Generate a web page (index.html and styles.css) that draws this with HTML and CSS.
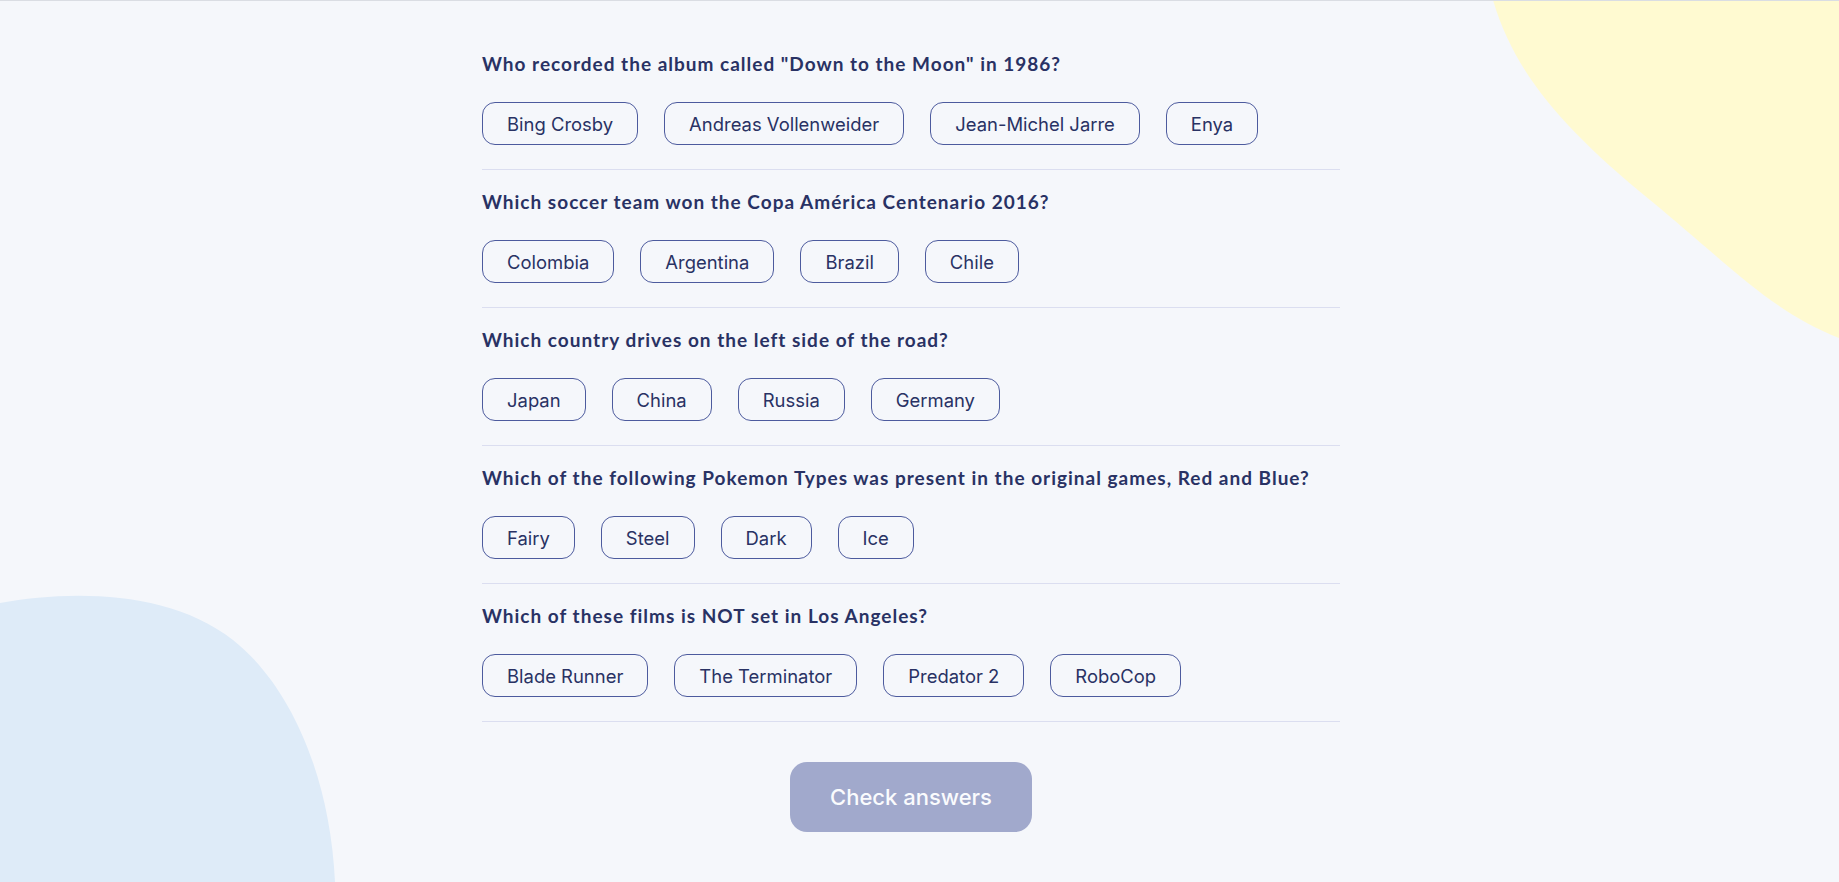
FILE: index.html
```html
<!DOCTYPE html>
<html lang="en">
<head>
<meta charset="utf-8">
<title>Quizzical</title>
<link rel="stylesheet" href="styles.css">
</head>
<body>
<svg class="blob blob-yellow" width="359" height="345" viewBox="0 0 359 345" aria-hidden="true">
  <path d="M13 0 C 35 75, 85 130, 170 200 S 290 310, 359 338 L 359 0 Z" fill="#FFFAD1"/>
</svg>
<svg class="blob blob-blue" width="340" height="292" viewBox="0 0 340 292" aria-hidden="true">
  <path d="M0 13 C 70 0, 170 0, 233 50 C 290 95, 330 185, 335 292 L 0 292 Z" fill="#DEEBF8"/>
</svg>
<main class="quiz">
  <section class="question">
    <h2 class="question-title">Who recorded the album called "Down to the Moon" in 1986?</h2>
    <div class="answers">
      <button class="answer">Bing Crosby</button>
      <button class="answer">Andreas Vollenweider</button>
      <button class="answer">Jean-Michel Jarre</button>
      <button class="answer">Enya</button>
    </div>
  </section>
  <section class="question">
    <h2 class="question-title">Which soccer team won the Copa América Centenario 2016?</h2>
    <div class="answers">
      <button class="answer">Colombia</button>
      <button class="answer">Argentina</button>
      <button class="answer">Brazil</button>
      <button class="answer">Chile</button>
    </div>
  </section>
  <section class="question">
    <h2 class="question-title">Which country drives on the left side of the road?</h2>
    <div class="answers">
      <button class="answer">Japan</button>
      <button class="answer">China</button>
      <button class="answer">Russia</button>
      <button class="answer">Germany</button>
    </div>
  </section>
  <section class="question">
    <h2 class="question-title">Which of the following Pokemon Types was present in the original games, Red and Blue?</h2>
    <div class="answers">
      <button class="answer">Fairy</button>
      <button class="answer">Steel</button>
      <button class="answer">Dark</button>
      <button class="answer">Ice</button>
    </div>
  </section>
  <section class="question">
    <h2 class="question-title">Which of these films is NOT set in Los Angeles?</h2>
    <div class="answers">
      <button class="answer">Blade Runner</button>
      <button class="answer">The Terminator</button>
      <button class="answer">Predator 2</button>
      <button class="answer">RoboCop</button>
    </div>
  </section>
  <div class="actions">
    <button class="check" disabled>Check answers</button>
  </div>
</main>
</body>
</html>
```
FILE: styles.css
```css
html, body {
  height: 100%;
}
body {
  margin: 0;
  padding: 0 17px 0 0;
  box-sizing: border-box;
  background: #F5F7FB;
  border-top: 1px solid #dadde3;
  overflow: hidden;
  position: relative;
  font-family: Inter, "Liberation Sans", sans-serif;
  color: #293264;
}
.blob {
  position: absolute;
  display: block;
  z-index: 0;
}
.blob-yellow {
  top: -1px;
  right: 0;
}
.blob-blue {
  left: 0;
  bottom: 0;
}
.quiz {
  position: relative;
  z-index: 1;
  width: 858px;
  margin: 0 auto;
  padding-top: 31px;
}
.question {
  padding: 20px 0 24px;
  border-bottom: 1px solid #DBDEF0;
}
.question-title {
  margin: 0 0 26px;
  font-family: Lato, "Open Sans", sans-serif;
  font-weight: 700;
  font-size: 19px;
  line-height: 24px;
  letter-spacing: 1px;
  color: #293264;
}
.answers {
  display: flex;
  gap: 26px;
}
.answer {
  height: 43px;
  box-sizing: border-box;
  padding: 0 24px;
  border: 1px solid #4D5B9E;
  border-radius: 13px;
  background: transparent;
  font-family: Inter, sans-serif;
  font-size: 18.45px;
  color: #293264;
  cursor: pointer;
}
.actions {
  display: flex;
  justify-content: center;
  padding-top: 40px;
}
.check {
  width: 242px;
  height: 70px;
  border: none;
  border-radius: 17px;
  background: #A1A9CC;
  color: #FAFBFD;
  font-family: Inter, sans-serif;
  font-weight: 500;
  font-size: 22px;
}
```
